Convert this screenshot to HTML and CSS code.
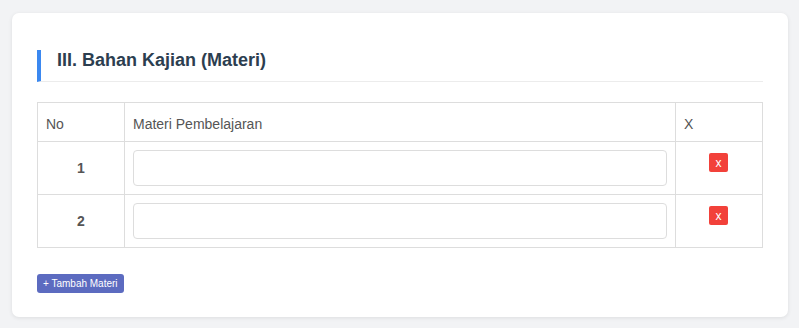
FILE: index.html
```html
<!DOCTYPE html>
<html>
<head>
<meta charset="utf-8">
<link rel="stylesheet" href="styles.css">
</head>
<body>
<div class="card">
  <h3 class="section-title">III. Bahan Kajian (Materi)</h3>
  <table class="materi-table">
    <thead>
      <tr>
        <th class="col-no">No</th>
        <th class="col-materi">Materi Pembelajaran</th>
        <th class="col-x">X</th>
      </tr>
    </thead>
    <tbody>
      <tr>
        <td class="num">1</td>
        <td><input class="text-input" type="text"></td>
        <td class="act"><button class="btn-del">x</button></td>
      </tr>
      <tr>
        <td class="num">2</td>
        <td><input class="text-input" type="text"></td>
        <td class="act"><button class="btn-del">x</button></td>
      </tr>
    </tbody>
  </table>
  <button class="btn-add">+ Tambah Materi</button>
</div>
</body>
</html>
```
FILE: styles.css
```css
html, body {
  margin: 0;
  padding: 0;
  background: #f2f3f5;
  font-family: "Liberation Sans", Arial, sans-serif;
}
body {
  padding: 13px 11px 11px 12px;
}
.card {
  background: #fff;
  border-radius: 7px;
  box-shadow: 0 1px 4px rgba(0, 0, 0, 0.09);
  padding: 37px 25px 24px 25px;
}
.section-title {
  margin: 0;
  font-size: 18px;
  font-weight: bold;
  color: #2c3e50;
  border-left: 4px solid #3b88f0;
  border-bottom: 1px solid #ececec;
  padding: 0 0 10px 16px;
  line-height: 21px;
}
.materi-table {
  margin-top: 20px;
  width: 100%;
  border-collapse: collapse;
  font-size: 14px;
  color: #555;
}
.materi-table th,
.materi-table td {
  border: 1px solid #ddd;
}
.materi-table th {
  text-align: left;
  font-weight: normal;
  padding: 11px 8px 7px 8px;
  line-height: 20px;
}
.col-no { width: 70px; }
.col-x { width: 70px; }
.materi-table td {
  padding: 8px;
  vertical-align: middle;
}
.num {
  text-align: center;
  font-weight: bold;
}
.text-input {
  display: block;
  box-sizing: border-box;
  width: 100%;
  height: 36px;
  border: 1px solid #ddd;
  border-radius: 4px;
  margin: 0;
  padding: 0 10px;
  font-size: 14px;
}
.act {
  text-align: center;
}
.materi-table td.act {
  vertical-align: top;
}
.btn-del {
  margin: 3px 1px 0 0;
  width: 19px;
  height: 19px;
  padding: 0;
  border: none;
  border-radius: 2px;
  background: #f2413a;
  color: #fff;
  font-family: "Liberation Sans", Arial, sans-serif;
  font-size: 12px;
  line-height: 18px;
}
.btn-add {
  margin-top: 26px;
  display: block;
  height: 19px;
  padding: 0 6px;
  border: none;
  border-radius: 3px;
  background: #5c6bc0;
  color: #fff;
  font-family: "Liberation Sans", Arial, sans-serif;
  font-size: 10px;
  font-weight: normal;
  line-height: 19px;
}
```
